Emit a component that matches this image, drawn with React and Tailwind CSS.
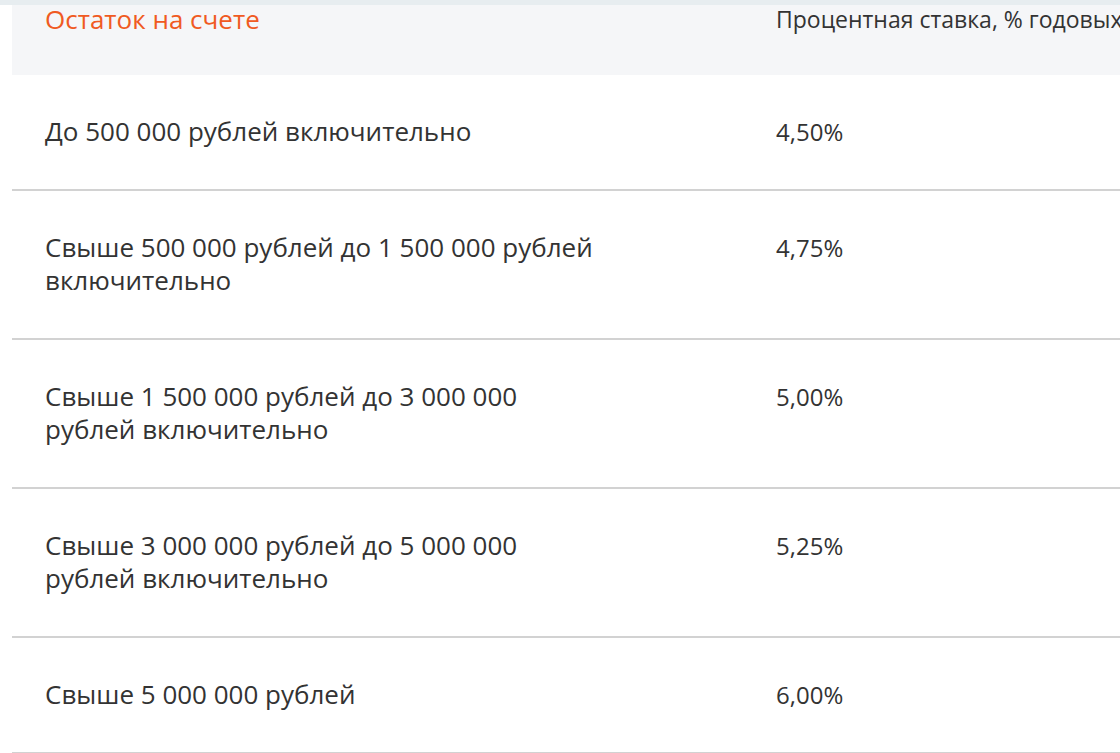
const rows = [
  { amount: "До 500 000 рублей включительно", rate: "4,50%" },
  { amount: "Свыше 500 000 рублей до 1 500 000 рублей включительно", rate: "4,75%" },
  { amount: "Свыше 1 500 000 рублей до 3 000 000 рублей включительно", rate: "5,00%" },
  { amount: "Свыше 3 000 000 рублей до 5 000 000 рублей включительно", rate: "5,25%" },
  { amount: "Свыше 5 000 000 рублей", rate: "6,00%" },
];

export default function App() {
  return (
    <div className="min-h-screen bg-white overflow-hidden" style={{ fontFamily: "'Open Sans', Lato, sans-serif" }}>
      <div className="h-[5px] bg-[#e7edf0]" />
      <div className="pl-3">
        {/* шапка таблицы */}
        <div className="grid grid-cols-[764px_1fr] h-[70px] bg-[#f5f6f8] leading-[29px]">
          <div className="pl-[33px] text-[26px] text-[#f05a22]">Остаток на счете</div>
          <div className="text-[23px] text-[#333333] whitespace-nowrap">Процентная ставка, % годовых</div>
        </div>

        {rows.map((r, i) => (
          <div
            key={i}
            className="grid grid-cols-[764px_1fr] border-b-2 border-[#d2d2d2] pt-10 pb-[41px] leading-[33px] text-[#333333]"
          >
            <div className="pl-[33px] text-[26px]">
              <div className="max-w-[558px]">{r.amount}</div>
            </div>
            <div className="text-[24px]">{r.rate}</div>
          </div>
        ))}
      </div>
    </div>
  );
}
